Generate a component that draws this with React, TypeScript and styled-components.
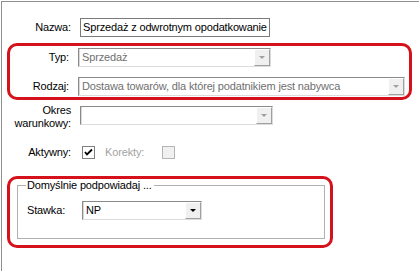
import styled, { createGlobalStyle } from "styled-components";

const Global = createGlobalStyle`
  html, body {
    margin: 0;
    padding: 0;
    background: #ffffff;
  }
  body {
    font-family: "Liberation Sans", Arial, sans-serif;
    font-size: 11px;
    letter-spacing: -0.15px;
    color: #000000;
  }
`;

const Frame = styled.div`
  margin: 1px 0 0 1px;
  height: 270px;
  border-left: 1px solid #8f8f8f;
  border-top: 1px solid #8f8f8f;
  padding-top: 16px;
  box-sizing: border-box;
  overflow: hidden;
`;

const Row = styled.div<{ $gap?: number; $top?: boolean }>`
  display: flex;
  align-items: ${(p) => (p.$top ? "flex-start" : "center")};
  margin-top: ${(p) => p.$gap ?? 0}px;
`;

const Label = styled.div<{ $w: number; $disabled?: boolean; $left?: boolean; $mr?: number }>`
  width: ${(p) => p.$w}px;
  flex: none;
  text-align: ${(p) => (p.$left ? "left" : "right")};
  margin-right: ${(p) => p.$mr ?? 9}px;
  line-height: 13px;
  color: ${(p) => (p.$disabled ? "#a3a3a3" : "#000000")};
`;

const TextInput = styled.div<{ $w: number }>`
  width: ${(p) => p.$w}px;
  height: 19px;
  box-sizing: border-box;
  border: 1px solid #7a7a7a;
  padding: 0 2px;
  line-height: 17px;
  white-space: nowrap;
  overflow: hidden;
`;

const Combo = styled.div<{ $w: number; $disabled?: boolean; $mt?: number }>`
  width: ${(p) => p.$w}px;
  height: 19px;
  margin-top: ${(p) => p.$mt ?? 0}px;
  box-sizing: border-box;
  display: flex;
  border: 1px solid;
  border-color: #8a8a8a #dcdcdc #dcdcdc #8a8a8a;
  background: #ffffff;
  color: ${(p) => (p.$disabled ? "#707070" : "#000000")};
`;

const ComboText = styled.div`
  flex: 1;
  padding: 0 3px 0 2px;
  line-height: 17px;
  white-space: nowrap;
  overflow: hidden;
  border-left: 1px solid #d8d8d8;
`;

const ComboButton = styled.div<{ $disabled?: boolean }>`
  width: 16px;
  flex: none;
  box-sizing: border-box;
  background: #f0f0f0;
  border: 1px solid;
  border-color: #ffffff #a0a0a0 #a0a0a0 #ffffff;
  display: flex;
  align-items: center;
  justify-content: center;

  &::after {
    content: "";
    border-left: 3px solid transparent;
    border-right: 3px solid transparent;
    border-top: 3px solid ${(p) => (p.$disabled ? "#a0a0a0" : "#000000")};
  }
`;

const Highlight = styled.div<{ $w: number; $mt: number }>`
  width: ${(p) => p.$w}px;
  margin: ${(p) => p.$mt}px 0 0 5px;
  box-sizing: border-box;
  border: 3px solid #d5121b;
  border-radius: 10px;
`;

const HighlightBody = styled.div`
  padding: 2px 0 1px;
`;

const Check = styled.div<{ $disabled?: boolean }>`
  width: 13px;
  height: 13px;
  box-sizing: border-box;
  border: 1px solid ${(p) => (p.$disabled ? "#b5b5b5" : "#808080")};
  background: ${(p) => (p.$disabled ? "#f0f0f0" : "#ffffff")};
  display: flex;
  align-items: center;
  justify-content: center;
  margin-right: 10px;
`;

const CheckSlot = styled.div`
  padding-left: 2px;
`;

const Group = styled.fieldset`
  margin: 0 5px 6px 7px;
  border: 1px solid #b0b0b0;
  padding: 0 0 0 9px;
  height: 60px;
  box-sizing: border-box;
`;

const Legend = styled.legend`
  padding: 0 2px 0 1px;
  margin-left: -1px;
  line-height: 13px;
`;

const Combos = ({
  w,
  text,
  disabled,
  mt,
}: {
  w: number;
  text: string;
  disabled?: boolean;
  mt?: number;
}) => (
  <Combo $w={w} $disabled={disabled} $mt={mt}>
    <ComboText>{text}</ComboText>
    <ComboButton $disabled={disabled} />
  </Combo>
);

export default function App() {
  return (
    <>
      <Global />
      <Frame>
        <Row>
          <Label $w={69}>Nazwa:</Label>
          <TextInput $w={190}>Sprzedaż z odwrotnym opodatkowanie</TextInput>
        </Row>

        <Highlight $w={405} $mt={6}>
          <HighlightBody>
            <Row>
              <Label $w={59}>Typ:</Label>
              <Combos w={193} text="Sprzedaż" disabled />
            </Row>
            <Row $gap={10}>
              <Label $w={59}>Rodzaj:</Label>
              <Combos
                w={327}
                text="Dostawa towarów, dla której podatnikiem jest nabywca"
                disabled
              />
            </Row>
          </HighlightBody>
        </Highlight>

        <Row $gap={4} $top>
          <Label $w={69}>
            Okres
            <br />
            warunkowy:
          </Label>
          <Combos w={193} text="" disabled mt={2} />
        </Row>

        <Row $gap={16}>
          <Label $w={69}>Aktywny:</Label>
          <CheckSlot>
            <Check>
              <svg width="9" height="9" viewBox="0 0 9 9">
                <path d="M1 4 L3 6.5 L8 1.5" stroke="#000" strokeWidth="1.8" fill="none" />
              </svg>
            </Check>
          </CheckSlot>
          <Label $w={45} $disabled $left $mr={12}>
            Korekty:
          </Label>
          <Check $disabled />
        </Row>

        <Highlight $w={326} $mt={17}>
          <Group>
            <Legend>Domyślnie podpowiadaj ...</Legend>
            <Row $gap={9}>
              <Label $w={55} $left $mr={0}>
                Stawka:
              </Label>
              <Combos w={120} text="NP" />
            </Row>
          </Group>
        </Highlight>
      </Frame>
    </>
  );
}
